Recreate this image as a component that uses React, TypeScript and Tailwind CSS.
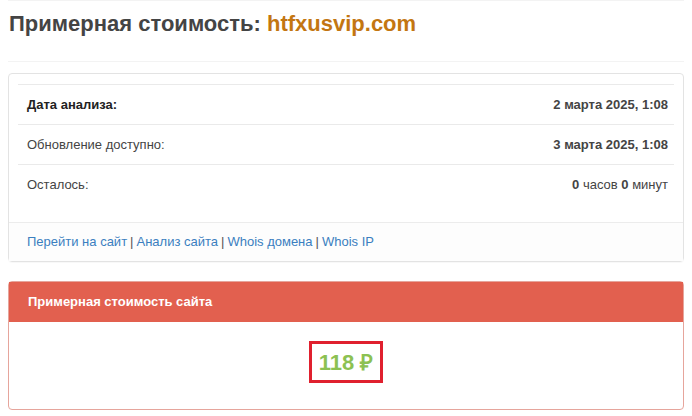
export default function App() {
  const rows = [
    { label: "Дата анализа:", bold: true, value: <b>2 марта 2025, 1:08</b> },
    { label: "Обновление доступно:", bold: false, value: <b>3 марта 2025, 1:08</b> },
    {
      label: "Осталось:",
      bold: false,
      value: (
        <>
          <b>0</b> часов <b>0</b> минут
        </>
      ),
    },
  ];

  const links = ["Перейти на сайт", "Анализ сайта", "Whois домена", "Whois IP"];

  return (
    <div className="w-[692px] h-[416px] overflow-hidden bg-white px-2 font-['Liberation_Sans',Arial,sans-serif] text-[#333]">
      <div className="border-t border-[#f3f3f3] pt-[10px] pb-[24px] border-b">
        <h1 className="text-[22px] font-bold leading-[26px] text-[#444] pl-px">
          Примерная стоимость: <span className="text-[#c37611]">htfxusvip.com</span>
        </h1>
      </div>

      <div className="mt-[11px] border border-[#e3e3e3] rounded-sm shadow-[0_1px_1px_rgba(0,0,0,0.03)]">
        <div className="px-[9px] pt-[10px] pb-[18px]">
          {rows.map((r, i) => (
            <div
              key={i}
              className="flex items-center justify-between h-[40px] border-t border-[#eaeaea] pl-[9px] pr-[6px] text-[13px]"
            >
              <span className={r.bold ? "font-bold text-[#222]" : "text-[#444]"}>{r.label}</span>
              <span className="text-[#444]">{r.value}</span>
            </div>
          ))}
        </div>
        <div className="flex items-center h-[39px] border-t border-[#ececec] bg-[#fdfdfd] px-[18px] text-[13px] text-[#555]">
          {links.map((l, i) => (
            <span key={i}>
              {i > 0 && <span className="px-[3px]">|</span>}
              <a className="text-[#3b7fc0]">{l}</a>
            </span>
          ))}
        </div>
      </div>

      <div className="mt-[19px] border border-[#e6a59c] rounded-sm">
        <div className="h-[40px] bg-[#e2604f] flex items-center px-[19px] text-[13px] font-bold text-white">
          Примерная стоимость сайта
        </div>
        <div className="flex justify-center pt-[19px] pb-[26px]">
          <div className="border-[3px] border-[#e0202e] h-[42px] w-[74px] flex items-center justify-center text-[22px] font-bold text-[#8cc152]">
            118 ₽
          </div>
        </div>
      </div>
    </div>
  );
}
